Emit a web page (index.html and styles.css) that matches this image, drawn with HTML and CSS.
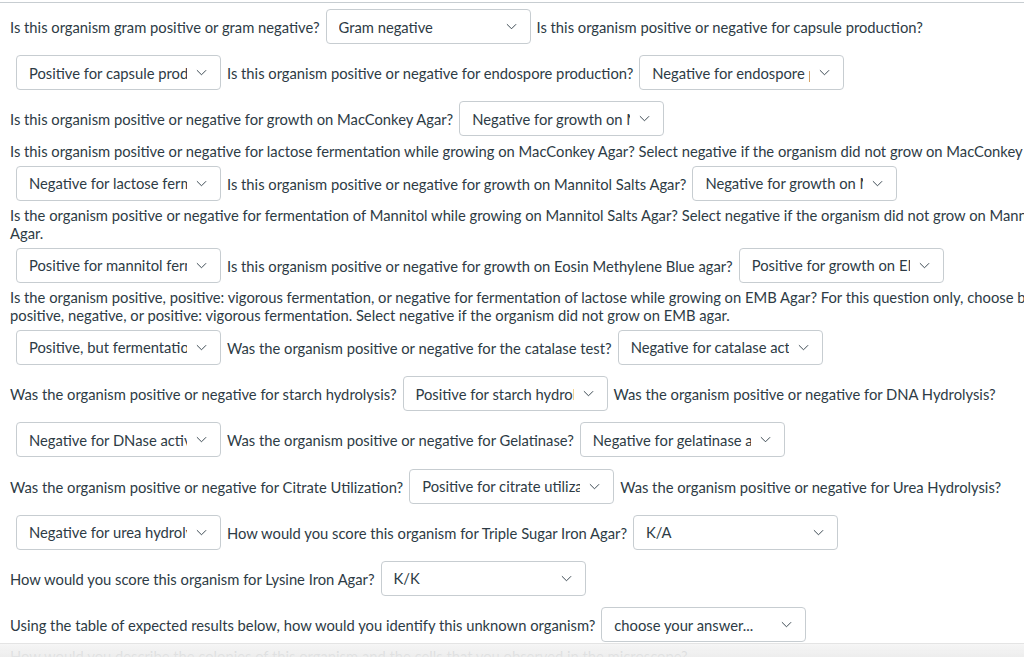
FILE: index.html
```html
<!DOCTYPE html>
<html lang="en">
<head>
<meta charset="utf-8">
<title>Quiz question</title>
<link rel="stylesheet" href="styles.css">
</head>
<body>
<div class="rule"></div>
<div class="question">
<p class="qtext">Is this organism gram positive or gram negative?<span class="sel"><span class="val">Gram negative</span><svg class="chev" viewBox="0 0 12 7"><path d="M1 1l5 5 5-5"/></svg></span>Is this organism positive or negative for capsule production?<span class="sel"><span class="val">Positive for capsule production</span><svg class="chev" viewBox="0 0 12 7"><path d="M1 1l5 5 5-5"/></svg></span>Is this organism positive or negative for endospore production?<span class="sel"><span class="val">Negative for endospore production</span><svg class="chev" viewBox="0 0 12 7"><path d="M1 1l5 5 5-5"/></svg></span><br>Is this organism positive or negative for growth on MacConkey Agar?<span class="sel"><span class="val">Negative for growth on MacConkey</span><svg class="chev" viewBox="0 0 12 7"><path d="M1 1l5 5 5-5"/></svg></span><br>Is this organism positive or negative for lactose fermentation while growing on MacConkey Agar? Select negative if the organism did not grow on MacConkey Agar.<br><span class="sel"><span class="val">Negative for lactose fermentation</span><svg class="chev" viewBox="0 0 12 7"><path d="M1 1l5 5 5-5"/></svg></span>Is this organism positive or negative for growth on Mannitol Salts Agar?<span class="sel"><span class="val">Negative for growth on Mannitol</span><svg class="chev" viewBox="0 0 12 7"><path d="M1 1l5 5 5-5"/></svg></span><br>Is the organism positive or negative for fermentation of Mannitol while growing on Mannitol Salts Agar? Select negative if the organism did not grow on Mannitol Salts Agar.<br><span class="sel"><span class="val">Positive for mannitol fermentation</span><svg class="chev" viewBox="0 0 12 7"><path d="M1 1l5 5 5-5"/></svg></span>Is this organism positive or negative for growth on Eosin Methylene Blue agar?<span class="sel"><span class="val">Positive for growth on EMB</span><svg class="chev" viewBox="0 0 12 7"><path d="M1 1l5 5 5-5"/></svg></span><br>Is the organism positive, positive: vigorous fermentation, or negative for fermentation of lactose while growing on EMB Agar? For this question only, choose between positive, negative, or positive: vigorous fermentation. Select negative if the organism did not grow on EMB agar.<br><span class="sel"><span class="val">Positive, but fermentation</span><svg class="chev" viewBox="0 0 12 7"><path d="M1 1l5 5 5-5"/></svg></span>Was the organism positive or negative for the catalase test?<span class="sel"><span class="val">Negative for catalase activity</span><svg class="chev" viewBox="0 0 12 7"><path d="M1 1l5 5 5-5"/></svg></span><br>Was the organism positive or negative for starch hydrolysis?<span class="sel"><span class="val">Positive for starch hydrolysis</span><svg class="chev" viewBox="0 0 12 7"><path d="M1 1l5 5 5-5"/></svg></span>Was the organism positive or negative for DNA Hydrolysis?<span class="sel"><span class="val">Negative for DNase activity</span><svg class="chev" viewBox="0 0 12 7"><path d="M1 1l5 5 5-5"/></svg></span>Was the organism positive or negative for Gelatinase?<span class="sel"><span class="val">Negative for gelatinase activity</span><svg class="chev" viewBox="0 0 12 7"><path d="M1 1l5 5 5-5"/></svg></span><br>Was the organism positive or negative for Citrate Utilization?<span class="sel"><span class="val">Positive for citrate utilization</span><svg class="chev" viewBox="0 0 12 7"><path d="M1 1l5 5 5-5"/></svg></span>Was the organism positive or negative for Urea Hydrolysis?<span class="sel"><span class="val">Negative for urea hydrolysis</span><svg class="chev" viewBox="0 0 12 7"><path d="M1 1l5 5 5-5"/></svg></span>How would you score this organism for Triple Sugar Iron Agar?<span class="sel"><span class="val">K/A</span><svg class="chev" viewBox="0 0 12 7"><path d="M1 1l5 5 5-5"/></svg></span><br>How would you score this organism for Lysine Iron Agar?<span class="sel"><span class="val">K/K</span><svg class="chev" viewBox="0 0 12 7"><path d="M1 1l5 5 5-5"/></svg></span><br>Using the table of expected results below, how would you identify this unknown organism?<span class="sel"><span class="val">choose your answer...</span><svg class="chev" viewBox="0 0 12 7"><path d="M1 1l5 5 5-5"/></svg></span><br>How would you describe the colonies of this organism and the cells that you observed in the microscope?</p>
</div>
<div class="shade"></div>
</body>
</html>
```

FILE: styles.css
```css
html, body {
  overflow: hidden;
}
body {
  margin: 0;
  padding-top: 2px;
  background: #ffffff;
  color: #2d3b45;
  font-family: Lato, "Liberation Sans", sans-serif;
  font-size: 14.75px;
}
.rule {
  border-top: 1px solid #c7cdd1;
}
.question {
  width: 1105px;
  padding: 0 0 0 10px;
}
.qtext {
  margin: 0;
  line-height: 18px;
}
.sel {
  display: inline-flex;
  align-items: center;
  vertical-align: baseline;
  box-sizing: border-box;
  width: 205px;
  height: 35px;
  margin: 6px 6px 5.2px 6px;
  padding: 0 13px 0 12px;
  border: 1px solid #c7cdd1;
  border-radius: 4px;
  background: #ffffff;
  color: #2d3b45;
  line-height: 18px;
}
.val {
  width: 158px;
  overflow: hidden;
  white-space: nowrap;
}
.chev {
  width: 11px;
  height: 7px;
  margin-left: auto;
  fill: none;
  stroke: #2d3b45;
  stroke-width: 1;
}
.shade {
  position: fixed;
  left: 0;
  right: 0;
  bottom: 0;
  height: 13px;
  background: linear-gradient(to bottom, rgba(244, 244, 244, 0.85), rgba(236, 236, 236, 0.95));
  border-top: 1px solid rgba(225, 225, 225, 0.8);
}
```
